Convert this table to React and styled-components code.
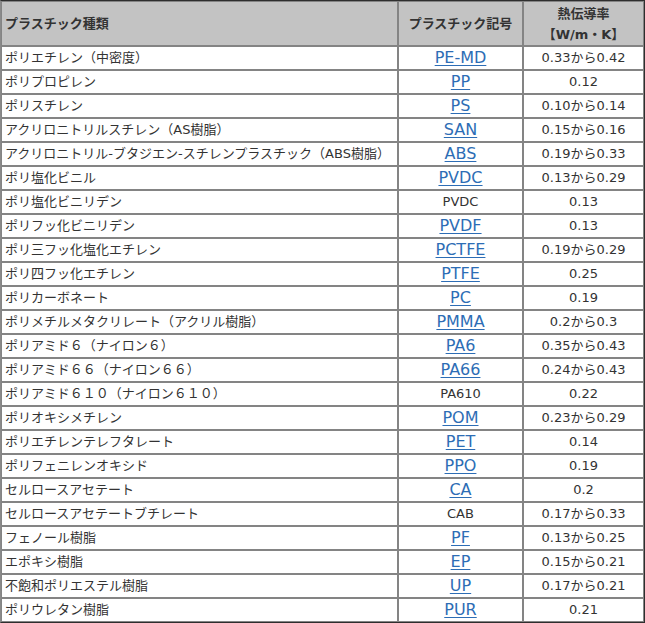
import styled, { createGlobalStyle } from 'styled-components';

const GlobalStyle = createGlobalStyle`
  html, body {
    margin: 0;
    padding: 0;
    background: #ffffff;
  }
  body {
    font-family: "DejaVu Sans", "Noto Sans CJK JP", sans-serif;
    color: #333333;
  }
`;

const Table = styled.table`
  width: 645px;
  box-sizing: border-box;
  table-layout: fixed;
  border-collapse: separate;
  border-spacing: 0;
  border: 1px solid #2e2e2e;
  border-left-color: #8a8a8a;
  font-size: 13px;
`;

const HeadCell = styled.th`
  box-sizing: border-box;
  height: 45px;
  padding: 0 3px;
  background: #c3c3c3;
  border: 1px solid #848484;
  font-weight: bold;
  font-size: 13px;
  line-height: 21px;
  color: #333333;
  text-align: ${(p) => (p.$left ? 'left' : 'center')};
  vertical-align: middle;
`;

const Cell = styled.td`
  box-sizing: border-box;
  height: 24px;
  padding: 0 3px;
  border: 1px solid #848484;
  line-height: 22px;
  white-space: nowrap;
  color: #333333;
  text-align: ${(p) => (p.$center ? 'center' : 'left')};
  vertical-align: middle;
`;

const CodeLink = styled.a`
  display: inline-block;
  vertical-align: top;
  margin-top: 1px;
  color: #2d6db5;
  font-size: 16px;
  line-height: 20px;
  text-decoration: underline;
  text-underline-offset: 2px;
`;

const rows = [
  ['ポリエチレン（中密度）', 'PE-MD', true, '0.33から0.42'],
  ['ポリプロピレン', 'PP', true, '0.12'],
  ['ポリスチレン', 'PS', true, '0.10から0.14'],
  ['アクリロニトリルスチレン（AS樹脂）', 'SAN', true, '0.15から0.16'],
  ['アクリロニトリル-ブタジエン-スチレンプラスチック（ABS樹脂）', 'ABS', true, '0.19から0.33'],
  ['ポリ塩化ビニル', 'PVDC', true, '0.13から0.29'],
  ['ポリ塩化ビニリデン', 'PVDC', false, '0.13'],
  ['ポリフッ化ビニリデン', 'PVDF', true, '0.13'],
  ['ポリ三フッ化塩化エチレン', 'PCTFE', true, '0.19から0.29'],
  ['ポリ四フッ化エチレン', 'PTFE', true, '0.25'],
  ['ポリカーボネート', 'PC', true, '0.19'],
  ['ポリメチルメタクリレート（アクリル樹脂）', 'PMMA', true, '0.2から0.3'],
  ['ポリアミド６（ナイロン６）', 'PA6', true, '0.35から0.43'],
  ['ポリアミド６６（ナイロン６６）', 'PA66', true, '0.24から0.43'],
  ['ポリアミド６１０（ナイロン６１０）', 'PA610', false, '0.22'],
  ['ポリオキシメチレン', 'POM', true, '0.23から0.29'],
  ['ポリエチレンテレフタレート', 'PET', true, '0.14'],
  ['ポリフェニレンオキシド', 'PPO', true, '0.19'],
  ['セルロースアセテート', 'CA', true, '0.2'],
  ['セルロースアセテートブチレート', 'CAB', false, '0.17から0.33'],
  ['フェノール樹脂', 'PF', true, '0.13から0.25'],
  ['エポキシ樹脂', 'EP', true, '0.15から0.21'],
  ['不飽和ポリエステル樹脂', 'UP', true, '0.17から0.21'],
  ['ポリウレタン樹脂', 'PUR', true, '0.21'],
];

const App = () => {
  return (
    <>
      <GlobalStyle />
      <Table>
        <colgroup>
          <col style={{ width: 397 }} />
          <col style={{ width: 125 }} />
          <col style={{ width: 121 }} />
        </colgroup>
        <thead>
          <tr>
            <HeadCell $left>プラスチック種類</HeadCell>
            <HeadCell>プラスチック記号</HeadCell>
            <HeadCell>
              熱伝導率
              <br />
              【W/m・K】
            </HeadCell>
          </tr>
        </thead>
        <tbody>
          {rows.map(([name, code, linked, value], i) => (
            <tr key={i}>
              <Cell>{name}</Cell>
              <Cell $center>
                {linked ? <CodeLink href="#">{code}</CodeLink> : code}
              </Cell>
              <Cell $center>{value}</Cell>
            </tr>
          ))}
        </tbody>
      </Table>
    </>
  );
};

export default App;
